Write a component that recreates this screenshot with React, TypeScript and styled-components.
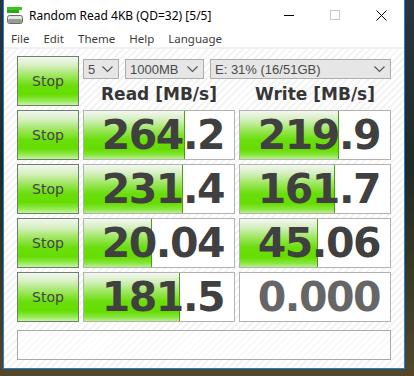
import React from 'react';
import styled, { createGlobalStyle } from 'styled-components';

const GlobalStyle = createGlobalStyle`
  html, body {
    margin: 0;
    padding: 0;
  }
  body {
    width: 414px;
    height: 376px;
    overflow: hidden;
    background: linear-gradient(180deg, #2b3440 0%, #222a26 45%, #3b3a24 75%, #54472c 100%);
  }
`;

const Desktop = styled.div`
  width: 414px;
  height: 376px;
  padding-left: 3px;
  box-sizing: border-box;
`;

const Window = styled.div`
  width: 402px;
  height: 369px;
  box-sizing: border-box;
  border: 1px solid #1883d7;
  border-top: none;
  background: #ffffff;
  display: flex;
  flex-direction: column;
`;

const TitleBar = styled.div`
  height: 30px;
  display: flex;
  align-items: center;
  font-family: 'Noto Sans', 'Open Sans', sans-serif;
  font-size: 12px;
  color: #000000;
`;

const AppIcon = styled.svg`
  margin-left: 3px;
  margin-right: 6px;
  flex-shrink: 0;
`;

const Title = styled.div`
  flex: 1;
  white-space: nowrap;
`;

const CaptionButton = styled.div`
  width: 46px;
  height: 30px;
  display: flex;
  align-items: center;
  justify-content: center;
`;

const MenuBar = styled.div`
  height: 18px;
  display: flex;
  align-items: center;
  font-family: 'Noto Sans', 'Open Sans', sans-serif;
  font-size: 11.5px;
  color: #3c3c3c;
  border-bottom: 2px solid #f0f0f0;
`;

const MenuItem = styled.div`
  padding: 0 7px;
  white-space: nowrap;
`;

const Client = styled.div`
  flex: 1;
  padding: 7px 13px 8px 13px;
  background: repeating-linear-gradient(135deg, #ffffff 0px, #ffffff 3px, #f3f3f3 3px, #f3f3f3 5px);
  display: flex;
  flex-direction: column;
`;

const Grid = styled.div`
  display: grid;
  grid-template-columns: 62px 152px 152px;
  grid-auto-rows: 50px;
  column-gap: 4px;
  row-gap: 4px;
`;

const StopButton = styled.div`
  box-sizing: border-box;
  border: 1px solid #6f7f6f;
  background: linear-gradient(180deg, #f3f6f1 0%, #d6f0c0 18%, #9be65a 40%, #6ade0c 60%, #66dd00 78%, #8ee84a 90%, #c4f59c 100%);
  display: flex;
  align-items: center;
  justify-content: center;
  font-family: 'Comic Sans MS', 'DejaVu Sans', sans-serif;
  font-size: 14px;
  color: #454545;
`;

const HeaderCell = styled.div`
  grid-column: span 2;
  display: flex;
  flex-direction: column;
`;

const SelectRow = styled.div`
  margin-top: 3px;
  height: 20px;
  display: flex;
  gap: 6px;
`;

const Select = styled.div<{ $width: number }>`
  width: ${(p) => p.$width}px;
  box-sizing: border-box;
  border: 1px solid #adadad;
  background: #e6e6e6;
  display: flex;
  align-items: center;
  justify-content: space-between;
  padding: 0 5px 0 4px;
  font-family: 'Liberation Sans', Arial, sans-serif;
  font-size: 13px;
  color: #4a4a4a;
`;

const LabelRow = styled.div`
  margin-top: 5px;
  display: grid;
  grid-template-columns: 152px 152px;
  column-gap: 4px;
`;

const ColumnLabel = styled.div`
  text-align: center;
  font-family: 'DejaVu Sans', sans-serif;
  font-weight: bold;
  font-size: 17px;
  line-height: 20px;
  color: #363636;
`;

const ValueBox = styled.div`
  position: relative;
  box-sizing: border-box;
  border: 1px solid #b2b2b2;
  background: #ffffff;
  overflow: hidden;
`;

const Bar = styled.div`
  position: absolute;
  left: 0;
  top: 0;
  bottom: 0;
  box-sizing: border-box;
  border-right: 1px solid #4c9c14;
  background: linear-gradient(180deg, #f4f7f1 0%, #d4efbe 18%, #9ae658 40%, #6ade0c 60%, #66dd00 80%, #88e640 92%, #b8f28a 100%);
`;

const Value = styled.div<{ $dim?: boolean }>`
  position: relative;
  height: 100%;
  display: flex;
  align-items: center;
  justify-content: flex-end;
  padding-right: 10px;
  font-family: 'DejaVu Sans', sans-serif;
  font-weight: bold;
  font-size: 41px;
  letter-spacing: -1.5px;
  color: ${(p) => (p.$dim ? '#666666' : '#404040')};
`;

const StatusBox = styled.div`
  margin-top: 8px;
  width: 374px;
  height: 30px;
  box-sizing: border-box;
  border: 1px solid #a9a9a9;
  background: rgba(255, 255, 255, 0.6);
`;

const Chevron = () => (
  <svg width="11" height="7" viewBox="0 0 11 7">
    <polyline points="0.5,0.5 5.5,5.5 10.5,0.5" fill="none" stroke="#555" strokeWidth="1.2" />
  </svg>
);

const rows = [
  { read: '264.2', readBar: 101, write: '219.9', writeBar: 99 },
  { read: '231.4', readBar: 99, write: '161.7', writeBar: 95 },
  { read: '20.04', readBar: 68, write: '45.06', writeBar: 78 },
  { read: '181.5', readBar: 96, write: '0.000', writeBar: 0 },
];

const App: React.FC = () => {
  return (
    <>
      <GlobalStyle />
      <Desktop>
        <Window>
          <TitleBar>
            <AppIcon width="16" height="17" viewBox="0 0 16 17">
              <rect x="0" y="0" width="15" height="3" fill="#3cc31e" />
              <rect x="0" y="3" width="12" height="3" fill="#28a814" />
              <rect x="0.5" y="8.5" width="15" height="8" rx="2" fill="#e4e4e4" stroke="#6a6a6a" />
              <rect x="1" y="12" width="14" height="4" rx="1.5" fill="#9a9a9a" />
              <rect x="11" y="13" width="2" height="2" fill="#44d41a" />
            </AppIcon>
            <Title>Random Read 4KB (QD=32) [5/5]</Title>
            <CaptionButton>
              <svg width="10" height="10" viewBox="0 0 10 10">
                <line x1="0" y1="5.5" x2="10" y2="5.5" stroke="#000" strokeWidth="1" />
              </svg>
            </CaptionButton>
            <CaptionButton>
              <svg width="10" height="10" viewBox="0 0 10 10">
                <rect x="0.5" y="0.5" width="9" height="9" fill="none" stroke="#c8c8c8" strokeWidth="1" />
              </svg>
            </CaptionButton>
            <CaptionButton>
              <svg width="11" height="11" viewBox="0 0 11 11">
                <line x1="0.5" y1="0.5" x2="10.5" y2="10.5" stroke="#000" strokeWidth="1" />
                <line x1="10.5" y1="0.5" x2="0.5" y2="10.5" stroke="#000" strokeWidth="1" />
              </svg>
            </CaptionButton>
          </TitleBar>
          <MenuBar>
            <MenuItem>File</MenuItem>
            <MenuItem>Edit</MenuItem>
            <MenuItem>Theme</MenuItem>
            <MenuItem>Help</MenuItem>
            <MenuItem>Language</MenuItem>
          </MenuBar>
          <Client>
            <Grid>
              <StopButton>Stop</StopButton>
              <HeaderCell>
                <SelectRow>
                  <Select $width={36}>
                    <span>5</span>
                    <Chevron />
                  </Select>
                  <Select $width={79}>
                    <span>1000MB</span>
                    <Chevron />
                  </Select>
                  <Select $width={181}>
                    <span>E: 31% (16/51GB)</span>
                    <Chevron />
                  </Select>
                </SelectRow>
                <LabelRow>
                  <ColumnLabel>Read [MB/s]</ColumnLabel>
                  <ColumnLabel>Write [MB/s]</ColumnLabel>
                </LabelRow>
              </HeaderCell>
              {rows.map((row, i) => (
                <React.Fragment key={i}>
                  <StopButton>Stop</StopButton>
                  <ValueBox>
                    {row.readBar > 0 && <Bar style={{ width: row.readBar }} />}
                    <Value>{row.read}</Value>
                  </ValueBox>
                  <ValueBox>
                    {row.writeBar > 0 && <Bar style={{ width: row.writeBar }} />}
                    <Value $dim={row.writeBar === 0}>{row.write}</Value>
                  </ValueBox>
                </React.Fragment>
              ))}
            </Grid>
            <StatusBox />
          </Client>
        </Window>
      </Desktop>
    </>
  );
};

export default App;
